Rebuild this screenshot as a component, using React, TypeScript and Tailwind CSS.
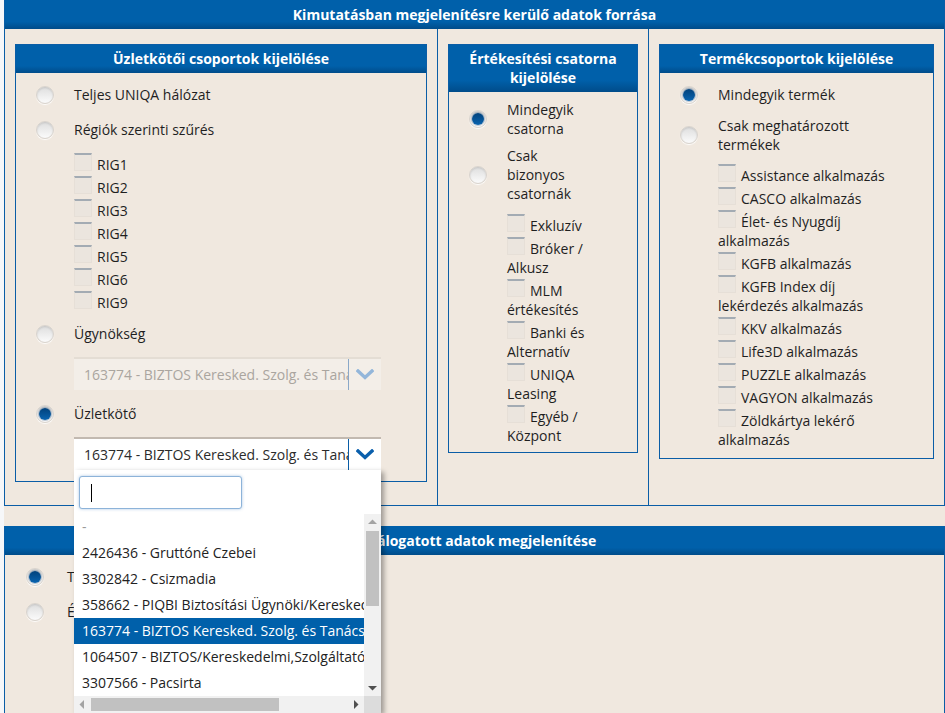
import React from "react";

const blueHead = "bg-linear-to-b from-[#0060aa] from-75% to-[#004c8a]";

function Radio({ checked }: { checked?: boolean }) {
  return (
    <span className="flex h-[18px] w-[18px] items-center justify-center rounded-full border border-[#d9d4ce] bg-linear-to-b from-[#dedede] to-[#fbfbfb] shadow-[0_1px_1px_rgba(255,255,255,0.9),inset_0_1px_2px_rgba(0,0,0,0.12)]">
      {checked && <span className="h-[12px] w-[12px] rounded-full bg-linear-to-b from-[#02427c] to-[#0a64b0] shadow-[0_0_0_1px_rgba(0,50,100,0.25)]" />}
    </span>
  );
}

function Box() {
  return (
    <span className="float-left -mt-[2px] mr-[5px] h-[18px] w-[18px] border-x border-b border-t-2 border-x-[#e6dfd7] border-b-[#e6dfd7] border-t-[#a3abb3] bg-[#ebe5de]" />
  );
}

function Check({ label }: { label: string }) {
  return (
    <div className="pt-[4px] leading-[19px]">
      <Box />
      {label}
    </div>
  );
}

function RadioRow({ checked, label, labelW }: { checked?: boolean; label: string; labelW?: string }) {
  return (
    <div className="flex min-h-[35px] items-center py-[4px]">
      <div className="w-[58px] shrink-0 pl-[20px]">
        <Radio checked={checked} />
      </div>
      <div className={`${labelW ?? "flex-1"} leading-[19px]`}>{label}</div>
    </div>
  );
}

function Chevron({ color }: { color: string }) {
  return (
    <svg width="18" height="11" viewBox="0 0 18 11">
      <path d="M2 2 L9 8.5 L16 2" fill="none" stroke={color} strokeWidth="3.4" strokeLinecap="square" />
    </svg>
  );
}

function Select({ disabled }: { disabled?: boolean }) {
  return (
    <div
      className={`ml-[58px] flex h-[33px] w-[307px] items-center border-t-2 ${
        disabled ? "border-[#e4ddd4] bg-[#f3eee8] text-[#aaa59f]" : "border-[#c2b9b0] bg-white text-[#2b2b2b]"
      }`}
    >
      <div className="w-[274px] overflow-hidden whitespace-nowrap pl-[10px]">163774 - BIZTOS Keresked. Szolg. és Tanácsadó Kft.</div>
      <div className={`h-[31px] w-px ${disabled ? "bg-[#8aa8c8]" : "bg-[#0a5da6]"}`} />
      <div className="flex flex-1 items-center justify-center">
        <Chevron color={disabled ? "#93b6da" : "#0a5fac"} />
      </div>
    </div>
  );
}

function Panel({ title, children, className }: { title: React.ReactNode; children: React.ReactNode; className?: string }) {
  return (
    <div className={`border border-[#0a5da6] ${className ?? ""}`}>
      <div className={`${blueHead} px-2 pb-[5px] pt-[4px] text-center text-[14px] font-bold leading-[19px] text-white`}>{title}</div>
      {children}
    </div>
  );
}

const items = [
  "2426436 - Gruttóné Czebei",
  "3302842 - Csizmadia",
  "358662 - PIQBI Biztosítási Ügynöki/Kereskedelmi Kft.",
  "163774 - BIZTOS Keresked. Szolg. és Tanácsadó Kft.",
  "1064507 - BIZTOS/Kereskedelmi,Szolgáltató és Tanácsadó",
  "3307566 - Pacsirta",
];

function Dropdown() {
  return (
    <div className="absolute left-[74px] top-[470px] z-10 h-[243px] w-[307px] overflow-hidden bg-white shadow-[3px_2px_5px_rgba(0,0,0,0.35)]">
      <div className="relative ml-[5px] mt-[6px] h-[33px] w-[163px] rounded-[3px] border border-[#8db3d9] bg-white shadow-[0_0_3px_rgba(80,140,200,0.5)]">
        <span className="absolute left-[11px] top-[7px] h-[18px] w-px bg-black" />
      </div>
      <div className="mt-[5px] flex">
        <div className="w-[290px]">
          <div className="h-[26px] overflow-hidden whitespace-nowrap pl-[8px] leading-[26px] text-[#9a9a9a]">-</div>
          {items.map((t, i) => (
            <div
              key={t}
              className={`h-[26px] overflow-hidden whitespace-nowrap pl-[8px] leading-[26px] ${
                i === 3 ? "bg-[#0060aa] text-white" : "text-[#222]"
              }`}
            >
              {t}
            </div>
          ))}
        </div>
        <div className="relative h-[182px] w-[17px] bg-[#f1f1f1]">
          <svg className="absolute left-[4px] top-[5px]" width="9" height="6" viewBox="0 0 9 6">
            <path d="M0 5 L4.5 0.5 L9 5 Z" fill="#a3a3a3" />
          </svg>
          <div className="absolute left-[2px] top-[17px] h-[75px] w-[13px] bg-[#c1c1c1]" />
          <svg className="absolute bottom-[5px] left-[4px]" width="9" height="6" viewBox="0 0 9 6">
            <path d="M0 1 L9 1 L4.5 5.5 Z" fill="#505050" />
          </svg>
        </div>
      </div>
      <div className="flex h-[17px]">
        <div className="relative w-[290px] bg-[#f1f1f1]">
          <svg className="absolute left-[5px] top-[4px]" width="6" height="9" viewBox="0 0 6 9">
            <path d="M5 0 L0.5 4.5 L5 9 Z" fill="#a3a3a3" />
          </svg>
          <div className="absolute left-[17px] top-[2px] h-[13px] w-[188px] bg-[#c1c1c1]" />
          <svg className="absolute right-[5px] top-[4px]" width="6" height="9" viewBox="0 0 6 9">
            <path d="M1 0 L5.5 4.5 L1 9 Z" fill="#505050" />
          </svg>
        </div>
        <div className="w-[17px] bg-[#dcdcdc]" />
      </div>
    </div>
  );
}

export default function App() {
  return (
    <div className="relative h-[713px] w-[945px] overflow-hidden bg-[#f6f7f9] font-['Open_Sans',sans-serif] text-[14px] text-[#1f1f1f]">
      <div className="ml-[4px] h-full bg-[#f0e8df]">
        <section className="border-x border-b border-[#0a5da6]">
          <div className={`${blueHead} h-[29px] text-center text-[14px] font-bold leading-[30px] text-white`}>
            Kimutatásban megjelenítésre kerülő adatok forrása
          </div>
          <div className="flex">
            <div className="w-[432px] px-[10px] pb-[23px] pt-[15px]">
              <Panel title="Üzletkötői csoportok kijelölése">
                <div className="pb-[11px] pt-[4px]">
                  <RadioRow label="Teljes UNIQA hálózat" />
                  <RadioRow label="Régiók szerinti szűrés" />
                  <div className="ml-[58px] mt-[4px]">
                    {["RIG1", "RIG2", "RIG3", "RIG4", "RIG5", "RIG6", "RIG9"].map((r) => (
                      <Check key={r} label={r} />
                    ))}
                  </div>
                  <div className="mt-[4px]">
                    <RadioRow label="Ügynökség" />
                  </div>
                  <div className="mt-[6px]">
                    <Select disabled />
                  </div>
                  <div className="mt-[6px]">
                    <RadioRow checked label="Üzletkötő" />
                  </div>
                  <div className="mt-[6px]">
                    <Select />
                  </div>
                </div>
              </Panel>
            </div>
            <div className="w-[211px] border-l border-[#0a5da6] px-[10px] pt-[15px]">
              <Panel
                title={
                  <>
                    Értékesítési csatorna
                    <br />
                    kijelölése
                  </>
                }
              >
                <div className="pb-[7px] pt-[4px]">
                  <RadioRow checked label="Mindegyik csatorna" labelW="w-[85px]" />
                  <RadioRow label="Csak bizonyos csatornák" labelW="w-[85px]" />
                  <div className="ml-[58px] mt-[5px] w-[85px]">
                    {["Exkluzív", "Bróker / Alkusz", "MLM értékesítés", "Banki és Alternatív", "UNIQA Leasing", "Egyéb / Központ"].map((c) => (
                      <Check key={c} label={c} />
                    ))}
                  </div>
                </div>
              </Panel>
            </div>
            <div className="flex-1 border-l border-[#0a5da6] pl-[10px] pr-[10px] pt-[15px]">
              <Panel title="Termékcsoportok kijelölése">
                <div className="pb-[9px] pt-[4px]">
                  <RadioRow checked label="Mindegyik termék" labelW="w-[150px]" />
                  <RadioRow label="Csak meghatározott termékek" labelW="w-[150px]" />
                  <div className="ml-[58px] mt-[4px] w-[175px]">
                    {[
                      "Assistance alkalmazás",
                      "CASCO alkalmazás",
                      "Élet- és Nyugdíj alkalmazás",
                      "KGFB alkalmazás",
                      "KGFB Index díj lekérdezés alkalmazás",
                      "KKV alkalmazás",
                      "Life3D alkalmazás",
                      "PUZZLE alkalmazás",
                      "VAGYON alkalmazás",
                      "Zöldkártya lekérő alkalmazás",
                    ].map((p) => (
                      <Check key={p} label={p} />
                    ))}
                  </div>
                </div>
              </Panel>
            </div>
          </div>
        </section>

        <section className="mt-[20px] h-[200px] border-x border-[#0a5da6]">
          <div className={`${blueHead} h-[29px] text-center text-[14px] font-bold leading-[30px] text-white`}>
            Leválogatott adatok megjelenítése
          </div>
          <div className="pt-[4px]">
            <div className="flex h-[35px] items-center">
              <div className="w-[62px] pl-[21px]">
                <Radio checked />
              </div>
              <span>Táblázat</span>
            </div>
            <div className="flex h-[35px] items-center">
              <div className="w-[62px] pl-[21px]">
                <Radio />
              </div>
              <span>Élő</span>
            </div>
          </div>
        </section>
      </div>
      <Dropdown />
    </div>
  );
}
